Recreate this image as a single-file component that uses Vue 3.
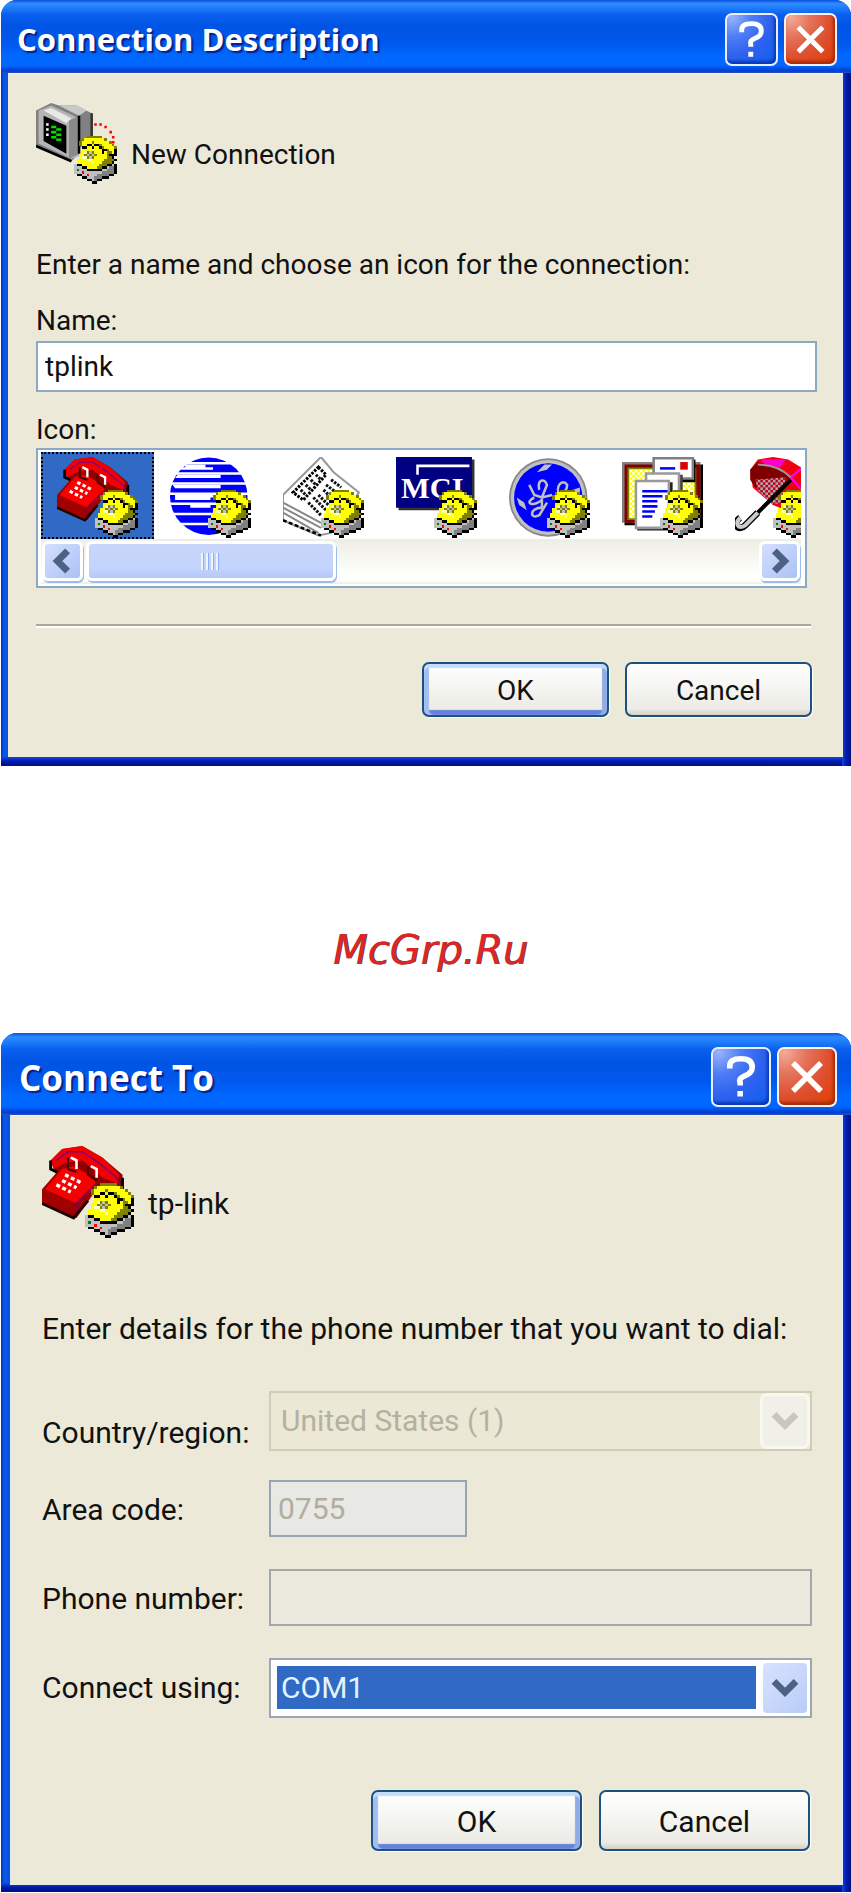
<script setup>
import {ref} from "vue";

const name = ref("tplink");
const selectedIcon = ref("phone");
const port = ref("COM1");

const icons = [
  {id: "phone", label: "Red telephone"},
  {id: "stripes", label: "Striped globe"},
  {id: "news", label: "Newspaper"},
  {id: "mci", label: "MCI", caption: "MCI"},
  {id: "ge", label: "Round emblem"},
  {id: "mail", label: "Mail board"},
  {id: "umbrella", label: "Umbrella"},
];

// pixel sprite of the small phone sitting on a modem
const palette = {
  K: "#000000",
  Y: "#ffff00",
  O: "#808000",
  W: "#ffffb0",
  G: "#c0c0c0",
  D: "#808080",
  R: "#ff0000",
  N: "#008000",
};

const sprite = [
  ".....OOOOOO......",
  "...OYYYYYYYYO....",
  "..OYYYYOYYYYYYO..",
  "..OYYKKYKKOYYYYO.",
  "...KKYYKYYKOYYYYO",
  "...YYYYYYYYKKOYYK",
  "...YWOGOYYYKYOOYK",
  "..YYOGOGOYYYYOKKK",
  "..YWWOGOYYYYYOOK.",
  ".YYYYWWYYYYYOOOOK",
  ".YYYYYYWYYYOOOOK.",
  "GKKYYYYYYYOOOKKGK",
  "GGGKKYYYYOOKKGDDK",
  "GNGGGKKKKKKGGDDDK",
  "GGGRGGGGGGGDDDDDK",
  ".KKGGRGGGDDDDDKK.",
  "...KKGGGDDDKKK...",
  ".....KKGDKK......",
  ".......KK........",
];

// merge neighbouring pixels of one colour into a single rect
const toRects = (rows) => {
  const rects = [];
  rows.forEach((row, y) => {
    let x = 0;
    while (x < row.length) {
      let end = x + 1;
      while (end < row.length && row[end] === row[x]) end++;
      if (row[x] !== ".") {
        rects.push({x, y, width: end - x, fill: palette[row[x]]});
      }
      x = end;
    }
  });
  return rects;
};

const phoneRects = toRects(sprite);
</script>

<template>
  <svg class="sprites" aria-hidden="true">
    <defs>
      <pattern id="dots" width="2" height="2" patternUnits="userSpaceOnUse">
        <rect width="1" height="1" fill="#fff"/>
        <rect x="1" y="1" width="1" height="1" fill="#fff"/>
      </pattern>
      <pattern id="gray-dots" width="2" height="2" patternUnits="userSpaceOnUse">
        <rect width="1" height="1" fill="#a8a8a8"/>
        <rect x="1" y="1" width="1" height="1" fill="#a8a8a8"/>
      </pattern>
    </defs>

    <symbol id="modem" viewBox="0 0 32 32">
      <g transform="translate(15 13)" shape-rendering="crispEdges">
        <rect v-for="(r, i) in phoneRects" :key="i" :x="r.x" :y="r.y" :width="r.width" height="1" :fill="r.fill"/>
      </g>
    </symbol>

    <symbol id="monitor" viewBox="0 0 32 32">
      <path d="M0 3L6 0L9 1L16 1L22 4V14L17 18V20L14 23L0 17Z" fill="#808080"/>
      <path d="M1 3L6 1L17 6V21L14 22L1 16Z" fill="#b4b4b4"/>
      <path d="M9 1L16 1L20 3L17 5Z" fill="#c8c8c8"/>
      <path d="M3 3L6 2L14 6L12 8Z" fill="#e8e8e8"/>
      <path d="M13 7L17 5V20L13 22Z" fill="#8a8a8a"/>
      <path d="M17 5V20M0 17L14 23" stroke="#000" fill="none"/>
      <path d="M22 4V14" stroke="#333" fill="none"/>
      <path d="M3 5L12 9V20L3 15Z" fill="#000"/>
      <path d="M4 8h1v1h-1zM4 10h1v1h-1zM4 12h1v1h-1z" fill="#fff"/>
      <path d="M6 9h2v1h2v1h-2v1h2v1h-2v1h2v1h-2v-1h-2v-1h2v-1h-2v-1h2v-1h-2z" fill="#00e000"/>
      <path d="M23 8h1v1h-1zM25 8h1v1h-1zM27 9h1v1h-1zM29 11h1v1h-1zM30 13h1v1h-1zM30 15h1v1h-1z" fill="#f00"/>
    </symbol>

    <symbol id="phone" viewBox="0 0 32 32">
      <path d="M3 5L7 1L14 0L21 4L28 10V15L23 16L17 13L12 8L5 10Z" fill="#900000"/>
      <path d="M3 5L7 1L14 0L21 4L27 10L26 13L21 11L14 5L8 6L4 8Z" fill="#f00000"/>
      <path d="M5 5L9 2L14 2L20 6L26 11L27 14" fill="none" stroke="#800080" stroke-width=".5"/>
      <path d="M3 5V8L7 10M28 11V15L25 16" fill="none" stroke="#000"/>
      <path d="M0 15L7 7L11 6L18 11L19 15L12 25L0 20Z" fill="#a00000"/>
      <path d="M1 15L7 8L11 7L18 11L19 14L12 20Z" fill="#f80000"/>
      <path d="M12 20V24M12 20L19 13" fill="none" stroke="#800040" stroke-width=".7"/>
      <path d="M0 20L11 25L16 19" fill="none" stroke="#200000"/>
      <path d="M8 10L14 13M7 12L12 14.500M5 13.500L10 16" fill="none" stroke="#fff" stroke-width="1.200" stroke-dasharray="1.400 .9"/>
      <path d="M10 4L12 5V8M17 7L19 8V11" fill="none" stroke="#fff" stroke-width=".9"/>
      <path d="M9 4V8L12 9M16 7V10L19 12" fill="none" stroke="#500000" stroke-width=".8"/>
    </symbol>

    <symbol id="stripes" viewBox="0 0 32 32">
      <circle cx="15.300" cy="15.500" r="15.300" fill="#00f"/>
      <path d="M0 2h32v1h-32zM0 6h32v1h-32zM0 10h32v1h-32zM0 14h32v1h-32zM0 18h32v1h-32zM0 22h32v1h-32zM0 26h32v1h-32z" fill="#fff"/>
      <path d="M6 3h8v1h3v1h-13v-1h2zM3 7h17v1.300h-18zM1 11h19v1.300h-18zM2 15h18v1h-4v1h-14zM8 19h8v1h-8z" fill="#fff"/>
    </symbol>

    <symbol id="news" viewBox="0 0 32 32">
      <path d="M15 0L20 6L30 14L19 30L14 31L0 25V15Z" fill="#fff" stroke="#999" stroke-width=".8"/>
      <path d="M0 18L15 26M0 20L15 28M0 22L14 30" fill="none" stroke="#888" stroke-width=".8"/>
      <path d="M0 25L15 31" fill="none" stroke="#000" stroke-dasharray="1.500 1"/>
      <path d="M14 4L17 7L8 17L4 14Z" fill="none" stroke="#000" stroke-width="1.200" stroke-dasharray="1 .5"/>
      <path d="M13 7L15 9M11 9L13 11M9 11L11 13M7 13L9 15M14 15L18 19M16 13L19 16M17 11L21 14M10 18L15 23M12 16L17 21M19 9L23 12" fill="none" stroke="#111" stroke-width="1.200" stroke-dasharray="1 .5"/>
    </symbol>

    <symbol id="mci" viewBox="0 0 32 32">
      <path d="M1 1H31V21H1Z" fill="#333"/>
      <path d="M0 0H30V20H0Z" fill="#000080"/>
      <path d="M8.500 7V3.500H29" fill="none" stroke="#fff"/>
    </symbol>

    <symbol id="ge" viewBox="0 0 32 32">
      <circle cx="15.500" cy="16" r="15.500" fill="#888"/>
      <circle cx="15.500" cy="16" r="14.800" fill="#c0c0c0"/>
      <circle cx="15.500" cy="16" r="13.500" fill="#00f"/>
      <path d="M11 6L14 3L17 3L15 5ZM3 16L6 18L7 21L4 19ZM25 13L28 12V15Z" fill="#c0c0c0"/>
      <path d="M8 11L10 15L13 16L17 15M13 16V20M12 13C11 9 14 8 15 11L13 16M10 16C6 18 9 20 13 17M20 15C18 12 21 8 23 11C23 14 20 15 18 17M13 20C8 20 8 25 12 23L15 18" fill="none" stroke="#c0c0c0"/>
    </symbol>

    <symbol id="mail" viewBox="0 0 32 32">
      <path d="M1 3H32V27H1Z" fill="#000"/>
      <path d="M0 2H31V26H0Z" fill="#808080"/>
      <path d="M1 3H31V26H1Z" fill="#800000"/>
      <path d="M2.500 4.500H29V24.500H2.500Z" fill="#ff0" stroke="#808000" stroke-width=".7"/>
      <path d="M3 5H28.500V24H3Z" fill="url(#dots)"/>
      <path d="M13 1H29V10H13Z" fill="#000"/>
      <path d="M12.500 .5H28V8.500H12.500Z" fill="#fff" stroke="#808080"/>
      <path d="M23 2H26V5H23Z" fill="#e00000"/>
      <path d="M15 4.500H21" stroke="#00f"/>
      <path d="M10 7H24V23H10Z" fill="#444"/>
      <path d="M9.500 6.500H22.500V22H9.500Z" fill="#fff" stroke="#999"/>
      <path d="M6 10H20V29H6Z" fill="#222"/>
      <path d="M5.500 9.500H18.500V28H5.500Z" fill="#fff" stroke="#999"/>
      <path d="M8 13.500H18M8 15.500H16M8 17.500H14M8 19.500H14M8 21.500H13M8 23.500H12" stroke="#00f"/>
    </symbol>

    <symbol id="umbrella" viewBox="0 0 32 32">
      <path d="M6 5L9 1L15 0L21 1L26 4L30 10L28 16L20 21L15 19L7 12Z" fill="#f00010"/>
      <path d="M6 5L9 2L16 4L22 8L14 13L8 12L6 9Z" fill="#800000"/>
      <path d="M8 9L20 8L18 18L15 19L9 13Z" fill="#c00020"/>
      <path d="M8 9L20 8L18 18L15 19L9 13Z" fill="url(#gray-dots)"/>
      <path d="M10 1L20 1L18 4L12 3Z" fill="#f0c"/>
      <path d="M22 8L27 4M22 8L28 15" stroke="#f0f" stroke-width=".8"/>
      <path d="M9 3C15 3 19 5 22 8" fill="none" stroke="#999" stroke-width=".8"/>
      <path d="M22 9L8 23" stroke="#000" stroke-width="1.600"/>
      <path d="M9 22L4 27C1 30 -1 26 2 24" fill="none" stroke="#000" stroke-width="2.600"/>
      <path d="M9 22L4 27C1 29 0 26 2 24" fill="none" stroke="#ccc" stroke-width="1.600"/>
    </symbol>
  </svg>

  <main class="page">
    <section class="dialog dialog--description" aria-labelledby="description-title">
      <header class="dialog__bar">
        <h1 id="description-title" class="dialog__title">Connection Description</h1>
        <button class="bar-button" type="button" aria-label="Help">
          <svg viewBox="0 0 20 20"><path d="M6 7V6Q6 3.500 10 3.500T14 6.500Q14 8.500 11.500 9.500T9.700 12V13M9.700 15V17"/></svg>
        </button>
        <button class="bar-button bar-button--close" type="button" aria-label="Close">
          <svg viewBox="0 0 20 20"><path d="M5 5L15 15M15 5L5 15"/></svg>
        </button>
      </header>
      <form class="dialog__body" @submit.prevent>
        <div class="heading">
          <svg class="heading__icon" viewBox="0 0 32 32" aria-hidden="true">
            <use href="#monitor"/>
            <use href="#modem"/>
          </svg>
          <span>New Connection</span>
        </div>
        <p class="intro">Enter a name and choose an icon for the connection:</p>
        <label class="field-label" for="connection-name">Name:</label>
        <input id="connection-name" v-model="name" class="text-box" type="text">
        <span id="icon-label" class="field-label">Icon:</span>
        <div class="icon-list">
          <div class="icon-list__items" role="group" aria-labelledby="icon-label">
            <button v-for="icon in icons"
                    :key="icon.id"
                    class="icon-list__item"
                    :class="{'icon-list__item--selected': icon.id === selectedIcon}"
                    type="button"
                    :aria-label="icon.label"
                    :aria-pressed="icon.id === selectedIcon"
                    @click="selectedIcon = icon.id">
              <svg viewBox="0 0 32 32">
                <use :href="`#${icon.id}`"/>
                <text v-if="icon.caption" class="icon-list__caption" x="2" y="16">{{ icon.caption }}</text>
                <use href="#modem"/>
              </svg>
            </button>
          </div>
          <div class="scroll-bar">
            <button class="scroll-bar__arrow" type="button" aria-label="Scroll left">
              <svg viewBox="0 0 20 20"><path d="M13 4L7 10L13 16"/></svg>
            </button>
            <div class="scroll-bar__track">
              <div class="scroll-bar__thumb"><span class="scroll-bar__grip"></span></div>
            </div>
            <button class="scroll-bar__arrow" type="button" aria-label="Scroll right">
              <svg viewBox="0 0 20 20"><path d="M7 4L13 10L7 16"/></svg>
            </button>
          </div>
        </div>
        <hr class="divider">
        <footer class="actions">
          <button class="push-button push-button--default" type="submit">OK</button>
          <button class="push-button" type="button">Cancel</button>
        </footer>
      </form>
    </section>

    <p class="site-mark">McGrp.Ru</p>

    <section class="dialog dialog--connect" aria-labelledby="connect-title">
      <header class="dialog__bar">
        <h1 id="connect-title" class="dialog__title">Connect To</h1>
        <button class="bar-button" type="button" aria-label="Help">
          <svg viewBox="0 0 20 20"><path d="M6 7V6Q6 3.500 10 3.500T14 6.500Q14 8.500 11.500 9.500T9.700 12V13M9.700 15V17"/></svg>
        </button>
        <button class="bar-button bar-button--close" type="button" aria-label="Close">
          <svg viewBox="0 0 20 20"><path d="M5 5L15 15M15 5L5 15"/></svg>
        </button>
      </header>
      <form class="dialog__body" @submit.prevent>
        <div class="heading">
          <svg class="heading__icon" viewBox="0 0 32 32" aria-hidden="true">
            <use href="#phone"/>
            <use href="#modem"/>
          </svg>
          <span>tp-link</span>
        </div>
        <p class="intro">Enter details for the phone number that you want to dial:</p>
        <div class="details">
          <label class="details__low" for="country">Country/region:</label>
          <div class="combo combo--disabled">
            <select id="country" class="combo__select" disabled>
              <option>United States (1)</option>
            </select>
            <span class="combo__arrow"><svg viewBox="0 0 20 20"><path d="M5 7L10 12L15 7"/></svg></span>
          </div>
          <label for="area">Area code:</label>
          <input id="area" class="text-box text-box--short" type="text" value="0755" disabled>
          <label for="number">Phone number:</label>
          <input id="number" class="text-box" type="text" disabled>
          <label for="port">Connect using:</label>
          <div class="combo">
            <select id="port" v-model="port" class="combo__select">
              <option>COM1</option>
              <option>COM2</option>
            </select>
            <span class="combo__arrow"><svg viewBox="0 0 20 20"><path d="M5 7L10 12L15 7"/></svg></span>
          </div>
        </div>
        <footer class="actions">
          <button class="push-button push-button--default" type="submit">OK</button>
          <button class="push-button" type="button">Cancel</button>
        </footer>
      </form>
    </section>
  </main>
</template>

<style>
body {
  margin: 0;
  background: #fff;
}
</style>

<style scoped>
* {
  box-sizing: border-box;
}

.sprites {
  position: absolute;
  width: 0;
  height: 0;
}

.page {
  padding-left: 1px;
  font-family: Roboto, "Liberation Sans", sans-serif;
  color: #111;
}

button,
input,
select {
  margin: 0;
  font: inherit;
  color: inherit;
}

.dialog {
  overflow: hidden;
  border-radius: 16px 16px 0 0;
  background:
    linear-gradient(to right, #0a4ae8, #0019a8 50%, #001080) right / 9px 100% no-repeat,
    linear-gradient(#0a4ae8, #0019a8 50%, #001080) bottom / 100% 9px no-repeat,
    linear-gradient(to right, #0030c8, #0a5ae8 40%, #0a50d8) left / 8px 100% no-repeat,
    #0a50e0;
}

.dialog--description {
  --bar-height: 73px;
  --bar-button: 53px;
  --title-size: 31px;
  --icon-size: 81px;
  --line: 32px;
  padding: 0 8px 9px 7px;
  font-size: 28px;
}

.dialog--connect {
  --bar-height: 82px;
  --bar-button: 60px;
  --title-size: 35px;
  --icon-size: 92px;
  --line: 36px;
  padding: 0 8px 7px 9px;
  font-size: 30px;
}

.dialog__bar {
  display: flex;
  align-items: center;
  gap: 6px;
  height: var(--bar-height);
  margin: 0 -8px 0 -9px;
  padding: 6px 14px 0 18px;
  background: linear-gradient(
    #0a50e0 0,
    #2f8cff 5%,
    #2080fa 10%,
    #0a5ff0 20%,
    #0054e3 35%,
    #0058ee 60%,
    #0068ff 76%,
    #0066ff 90%,
    #003dd0 97%,
    #2a50c0 100%
  );
}

.dialog__title {
  flex: 1;
  margin: 0;
  font-family: "Open Sans", "Noto Sans", sans-serif;
  font-size: var(--title-size);
  font-weight: 700;
  line-height: 1;
  color: #fff;
  text-shadow: 2px 2px 1px #0a1f8a;
}

.bar-button {
  width: var(--bar-button);
  height: var(--bar-button);
  padding: 0;
  border: 2px solid #e8f0ff;
  border-radius: 7px;
  background: radial-gradient(circle at 10% 5%, #9ab4fa 0, #4f7df5 30%, #2e62ee 60%, #0a60f0 100%);
  box-shadow: inset -2px -3px 3px #0a38b8;
}

.bar-button--close {
  border-color: #fff0f0;
  background: radial-gradient(circle at 10% 5%, #f2aa98 0, #e4745c 30%, #de5030 60%, #e03c00 100%);
  box-shadow: inset -2px -3px 3px #a82c08;
}

.bar-button svg {
  display: block;
  width: 100%;
  height: 100%;
  fill: none;
  stroke: #fff;
  stroke-width: 2;
}

.dialog__body {
  border-top: 1px solid #f4f4ea;
  background: #ece9d8;
}

.dialog--description .dialog__body {
  padding: 29px 26px 40px 28px;
}

.dialog--connect .dialog__body {
  padding: 30px 29px 34px 30px;
  border-left: 2px solid #dfe8fa;
  border-right: 2px solid #dfe8fa;
}

.heading {
  display: flex;
  align-items: center;
  gap: 14px;
  height: var(--icon-size);
}

.heading span {
  padding-top: 22px;
}

.heading__icon {
  width: var(--icon-size);
  height: var(--icon-size);
}

.intro {
  margin: 65px 0 0;
  line-height: var(--line);
}

.dialog--connect .intro {
  margin-top: 73px;
}

.field-label {
  display: block;
  margin-top: 24px;
  line-height: var(--line);
}

.text-box {
  display: block;
  width: 100%;
  height: 51px;
  margin-top: 4px;
  padding: 0 7px;
  border: 2px solid #8ba9c4;
  background: #fff;
}

.icon-list {
  margin: 2px 10px 0 0;
  padding: 2px 4px 2px 3px;
  border: 2px solid #8ba9c4;
  background: #fff;
}

.text-box + .field-label {
  margin-top: 22px;
}

.icon-list__items {
  display: flex;
  overflow: hidden;
}

.icon-list__item {
  flex: 0 0 113px;
  height: 87px;
  padding: 5px 16px 1px;
  border: 0;
  background: none;
}

.icon-list__item--selected {
  background: #316ac5;
  outline: 2px dotted #000;
  outline-offset: -2px;
}

.icon-list__item svg {
  display: block;
  width: 81px;
  height: 81px;
}

.icon-list__caption {
  font-family: "Liberation Serif", serif;
  font-size: 12px;
  font-weight: 700;
  fill: #fff;
}

.scroll-bar {
  display: flex;
  height: 45px;
  padding: 2px 1px 0;
  background: linear-gradient(#eeede5, #fdfdf9 70%, #fefefa 92%, #eeede5);
}

.scroll-bar__track {
  flex: 1;
  display: flex;
}

.scroll-bar__arrow,
.scroll-bar__thumb {
  height: 40px;
  padding: 0;
  border: 3px solid #fff;
  border-radius: 6px;
  background: linear-gradient(135deg, #d4dffc, #bccdfa 60%, #a8c2f4);
  box-shadow: 1px 2px 0 #9dbce8;
}

.scroll-bar__arrow {
  width: 41px;
}

.scroll-bar__arrow svg {
  display: block;
  width: 100%;
  height: 100%;
  fill: none;
  stroke: #4d6185;
  stroke-width: 4;
}

.scroll-bar__thumb {
  width: 37%;
  margin-left: 3px;
  display: flex;
  align-items: center;
  justify-content: center;
  background: linear-gradient(#c8d6fb, #c4d3fc 70%, #b4c9f8);
}

.scroll-bar__grip {
  width: 20px;
  height: 17px;
  background: repeating-linear-gradient(to right, #eef4fe 0 2px, #8cb0f8 2px 3px, #c4d3fc 3px 5px);
}

.divider {
  height: 4px;
  margin: 36px 6px 0 0;
  border: 0;
  border-top: 2px solid #aca899;
  border-bottom: 2px solid #fff;
}

.actions {
  display: flex;
  justify-content: flex-end;
}

.dialog--description .actions {
  gap: 16px;
  margin: 34px 5px 0 0;
}

.dialog--connect .actions {
  gap: 17px;
  margin: 72px 2px 0 0;
}

.push-button {
  width: 187px;
  height: 55px;
  padding: 2px 0 0;
  border: 2px solid #1c5180;
  border-radius: 7px;
  background: linear-gradient(#fff, #f4f4f0 50%, #ecebe5 88%, #d6d0c5);
  box-shadow: 1px 1px 1px #fff;
}

.push-button--default {
  box-shadow: inset 0 4px 1px #c2dcfa, inset 5px 0 1px #a2bdf0, inset -5px 0 1px #8fabe8, inset 0 -5px 1px #6482dc, 1px 1px 1px #fff;
}

.dialog--connect .push-button {
  width: 211px;
  height: 61px;
}

.site-mark {
  margin: 168px 0 67px;
  padding-left: 332px;
  font-family: "DejaVu Sans", sans-serif;
  font-size: 40px;
  font-style: oblique;
  line-height: 32px;
  color: #dc2626;
  text-shadow: 1px 0 0 #5a3038;
}

.details {
  display: grid;
  grid-template-columns: 227px 1fr;
  grid-auto-rows: 60px;
  row-gap: 29px;
  margin-top: 44px;
  line-height: var(--line);
}

.details label {
  align-self: center;
}

.details .details__low {
  align-self: end;
}

.details .text-box {
  height: 57px;
  margin: 0;
  border-color: #a2a8ac;
  background: #ebe9dd;
  color: #b3ad9c;
}

.details .text-box--short {
  width: 198px;
  border-color: #98a4b4;
  background: #e8e8e4;
}

.combo {
  position: relative;
  border: 2px solid #9ba8b4;
  background: #fff;
}

.combo__select {
  width: 100%;
  height: 100%;
  padding: 0 56px 0 10px;
  appearance: none;
  border: 0;
  border-radius: 0;
  outline: 0;
  background: linear-gradient(#316ac5, #316ac5) 6px 6px / calc(100% - 60px) calc(100% - 13px) no-repeat;
  color: #e4f4ff;
}

.combo__arrow {
  position: absolute;
  top: 3px;
  right: 3px;
  bottom: 3px;
  width: 44px;
  border-radius: 4px;
  background: linear-gradient(135deg, #d8e2fd, #b8ccf8);
  pointer-events: none;
}

.combo__arrow svg {
  display: block;
  width: 100%;
  height: 100%;
  fill: none;
  stroke: #4d6185;
  stroke-width: 3;
}

.combo--disabled {
  border-color: #cfccb8;
  background: #ebe8d6;
}

.combo--disabled .combo__select {
  background: none;
  color: #b5b19f;
  opacity: 1;
}

.combo--disabled .combo__arrow {
  background: #f0efe8;
  box-shadow: 0 0 0 3px #f8f8f0;
}

.combo--disabled .combo__arrow svg {
  stroke: #c8c7bc;
}
</style>
